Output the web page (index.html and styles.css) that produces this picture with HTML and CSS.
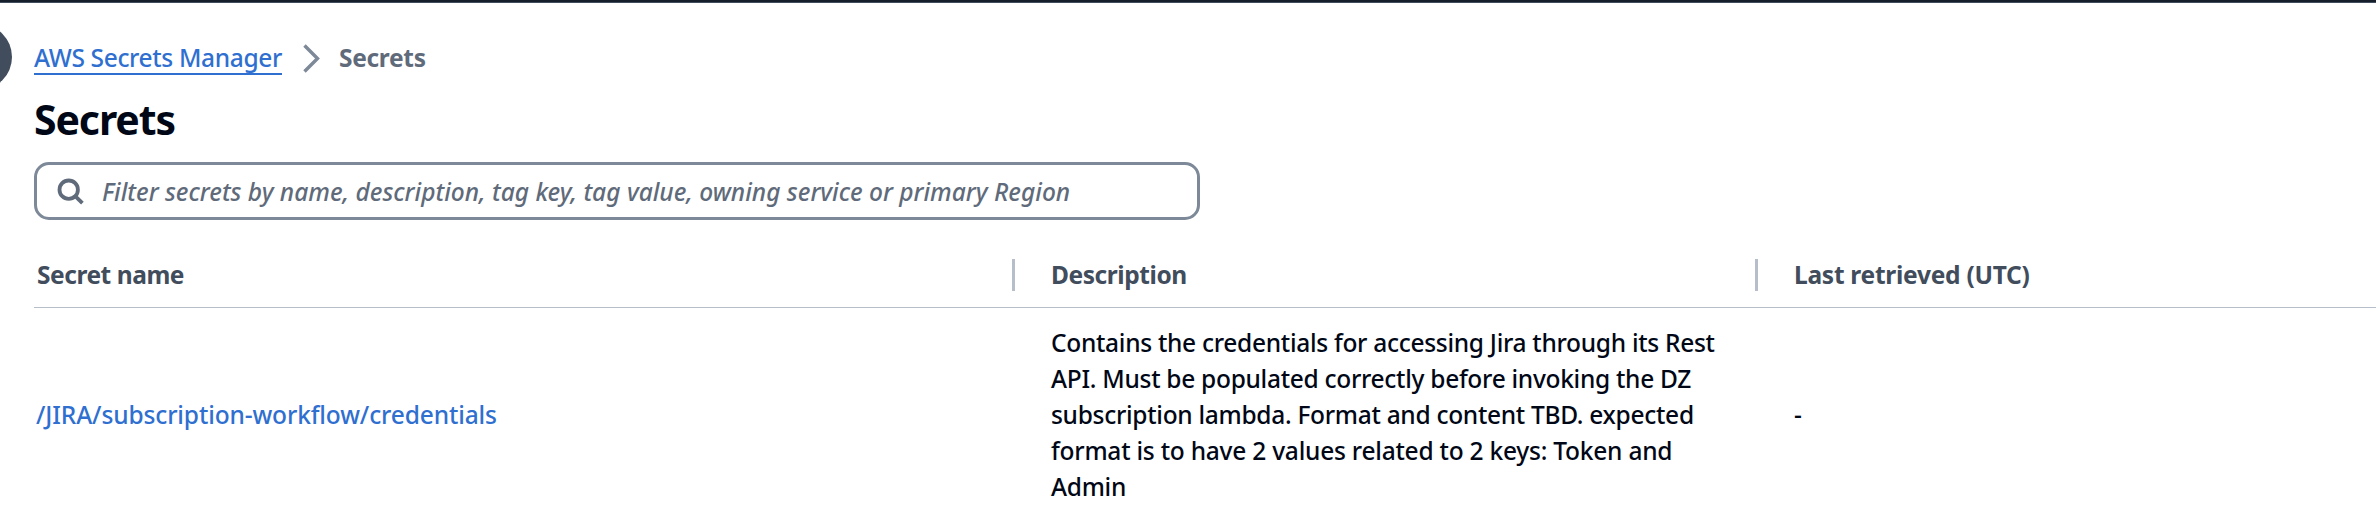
FILE: index.html
```
<!DOCTYPE html>
<html lang="en">
<head>
<meta charset="utf-8">
<title>Secrets</title>
<link rel="stylesheet" href="styles.css">
</head>
<body>
<div class="topbar"></div>
<span class="drawer-toggle"></span>
<main class="page">
  <nav class="breadcrumb">
    <a class="crumb-link">AWS Secrets Manager</a>
    <svg class="chevron" width="18" height="30" viewBox="0 0 18 30"><path d="M1.5 2.5 14.5 15.5 1.5 28.5"/></svg>
    <span class="crumb-current">Secrets</span>
  </nav>
  <h1 class="title">Secrets</h1>
  <div class="search">
    <svg class="search-icon" width="28" height="28" viewBox="0 0 28 28"><circle cx="11.7" cy="12.7" r="9.2"/><path d="M18.2 19.2 25.4 26.2"/></svg>
    <span class="placeholder">Filter secrets by name, description, tag key, tag value, owning service or primary Region</span>
  </div>
  <section class="table">
    <div class="row head">
      <div class="cell name">Secret name</div>
      <div class="cell desc">Description</div>
      <div class="cell last">Last retrieved (UTC)</div>
    </div>
    <div class="row body">
      <div class="cell"><a class="secret-link">/JIRA/subscription-workflow/credentials</a></div>
      <div class="cell text">Contains the credentials for accessing Jira through its Rest<br>API. Must be populated correctly before invoking the DZ<br>subscription lambda. Format and content TBD. expected<br><span class="loose">format is to have 2 values related to 2 keys: Token and</span><br>Admin</div>
      <div class="cell">-</div>
    </div>
  </section>
</main>
</body>
</html>
```
FILE: styles.css
```
* { box-sizing: border-box; }
body {
  margin: 0;
  height: 516px;
  overflow: hidden;
  position: relative;
  background: #fff;
  color: #000716;
  font: 500 24.5px/36px "Noto Sans", sans-serif;
}
.topbar { height: 3px; background: #161d2b; border-bottom: 1px solid #414d5c; }
.drawer-toggle {
  position: absolute;
  left: -54px;
  top: 24px;
  width: 66px;
  height: 66px;
  border-radius: 50%;
  background: #414d5c;
}
.page { padding: 36px 0 0 34px; }
.breadcrumb { display: flex; align-items: center; height: 36px; }
.crumb-link {
  height: 36px;
  line-height: 38px;
  color: #2f6fd0;
  letter-spacing: -0.35px;
  box-shadow: inset 0 -2px #2f6fd0;
}
.chevron { margin: 1px 18px 0 21px; fill: none; stroke: #7d8998; stroke-width: 3.4; }
.crumb-current { height: 36px; line-height: 38px; color: #5f6b7a; font-weight: 700; letter-spacing: -0.3px; }
.title {
  margin: 20px 0 19px;
  font-size: 41px;
  line-height: 48px;
  font-weight: 700;
  letter-spacing: -1.1px;
}
.search {
  display: flex;
  align-items: center;
  width: 1166px;
  height: 58px;
  padding-left: 20px;
  border: 3px solid #7d8998;
  border-radius: 15px;
}
.search-icon { fill: none; stroke: #5f6b7a; stroke-width: 3.8; }
.placeholder { margin-left: 17px; padding-top: 2px; color: #5f6b7a; font-style: italic; }
.table { margin-top: 23px; }
.row { display: grid; grid-template-columns: 978px 743px 1fr; align-items: center; }
.head {
  height: 65px;
  border-bottom: 1px solid #b6bec9;
  color: #414d5c;
  font-weight: 700;
}
.head .cell { display: flex; align-items: center; }
.cell { padding-left: 39px; }
.cell:first-child { padding-left: 2px; }
.head .cell:first-child { padding-left: 3px; }
.head .cell:not(:first-child) { padding-left: 0; }
.head .cell:not(:first-child)::before {
  content: "";
  width: 3px;
  height: 32px;
  margin-right: 36px;
  background: #b6bec9;
}
.name { letter-spacing: -0.45px; }
.desc { letter-spacing: -0.42px; }
.last { letter-spacing: -0.26px; }
.body { padding-top: 17px; }
.secret-link { color: #2f6fd0; letter-spacing: -0.13px; }
.text { letter-spacing: -0.29px; white-space: nowrap; }
.loose { letter-spacing: -0.23px; }
```
